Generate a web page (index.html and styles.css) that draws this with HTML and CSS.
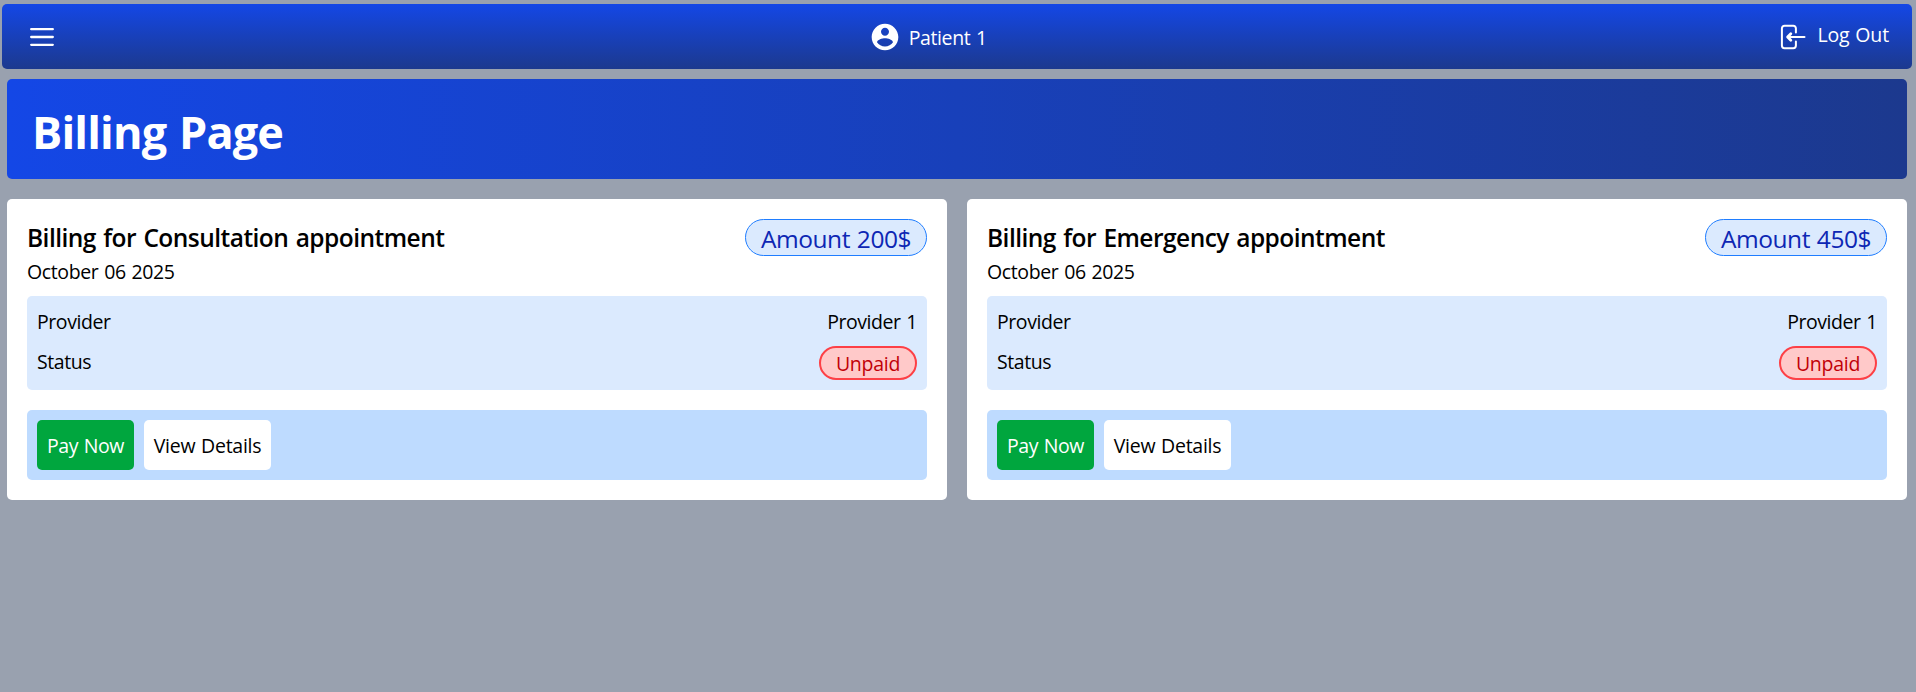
FILE: index.html
```html
<!DOCTYPE html>
<html lang="en">
<head>
<meta charset="utf-8">
<title>Billing Page</title>
<link rel="stylesheet" href="styles.css">
</head>
<body>
<header class="navbar">
  <svg class="menu-icon" viewBox="0 0 24 20" aria-label="Menu"><path d="M1.200 2.200h21.600M1.200 10h21.600M1.200 17.800h21.600"/></svg>
  <div class="user">
    <svg class="user-icon" viewBox="0 0 24 24"><path d="M12 2C6.480 2 2 6.480 2 12s4.480 10 10 10 10-4.480 10-10S17.520 2 12 2zm0 3c1.660 0 3 1.340 3 3s-1.340 3-3 3-3-1.340-3-3 1.340-3 3-3zm0 14.200c-2.500 0-4.710-1.280-6-3.220.030-1.990 4-3.080 6-3.080 1.990 0 5.970 1.090 6 3.080-1.290 1.940-3.500 3.220-6 3.220z"/></svg>
    <span class="user-name">Patient 1</span>
  </div>
  <div class="logout">
    <svg class="logout-icon" viewBox="0 0 26 26"><path d="M15.900 8.400V4.400a2.600 2.600 0 0 0-2.600-2.600H4.500a2.600 2.600 0 0 0-2.600 2.600v17.200a2.600 2.600 0 0 0 2.600 2.600h8.800a2.600 2.600 0 0 0 2.600-2.600v-4"/><path d="M24.500 13H8"/><path class="arrow-head" d="M10.800 9.800L7.600 13l3.200 3.200"/></svg>
    <span class="logout-label">Log Out</span>
  </div>
</header>
<main class="page">
  <section class="banner"><h1 class="banner-title">Billing Page</h1></section>
  <section class="cards">
    <article class="card">
      <div class="card-head">
        <div>
          <h2 class="card-title">Billing for Consultation appointment</h2>
          <p class="date">October 06 2025</p>
        </div>
        <span class="amount">Amount 200$</span>
      </div>
      <div class="info">
        <div class="row"><span>Provider</span><span>Provider 1</span></div>
        <div class="row"><span>Status</span><span class="status">Unpaid</span></div>
      </div>
      <div class="actions">
        <button class="button pay">Pay Now</button>
        <button class="button details">View Details</button>
      </div>
    </article>
    <article class="card">
      <div class="card-head">
        <div>
          <h2 class="card-title">Billing for Emergency appointment</h2>
          <p class="date">October 06 2025</p>
        </div>
        <span class="amount">Amount 450$</span>
      </div>
      <div class="info">
        <div class="row"><span>Provider</span><span>Provider 1</span></div>
        <div class="row"><span>Status</span><span class="status">Unpaid</span></div>
      </div>
      <div class="actions">
        <button class="button pay">Pay Now</button>
        <button class="button details">View Details</button>
      </div>
    </article>
  </section>
</main>
</body>
</html>
```
FILE: styles.css
```css
* { box-sizing: border-box; margin: 0; padding: 0; }
body {
  min-height: 100vh;
  background: #99a1af;
  color: #000;
  font: 19.5px/30px "Segoe UI", "Open Sans", "Noto Sans", sans-serif;
  word-spacing: 1px;
}
.navbar {
  display: flex;
  justify-content: space-between;
  align-items: center;
  height: 65px;
  margin: 4px 4px 0 2px;
  padding: 0 23px 0 28px;
  border-radius: 5px;
  background: linear-gradient(#1447e6, #1c398e);
  color: #fff;
}
.menu-icon { width: 24px; height: 20px; margin-right: 21px; fill: none; stroke: #fff; stroke-width: 2.3; stroke-linecap: round; }
.user { display: flex; align-items: center; gap: 8px; }
.user-icon { width: 32px; height: 32px; fill: #fff; }
.user-name { letter-spacing: -0.38px; padding-top: 3px; }
.logout { display: flex; align-items: center; gap: 11px; }
.logout-icon { width: 26px; height: 26px; fill: none; stroke: #fff; stroke-width: 2; stroke-linecap: round; stroke-linejoin: round; }
.arrow-head { stroke-width: 2.8; }
.logout-label { letter-spacing: -0.15px; padding-bottom: 3px; }
.page { margin: 10px 9px 0 7px; }
.banner {
  display: flex;
  align-items: center;
  height: 100px;
  padding: 6px 25px 0;
  border-radius: 5px;
  background: linear-gradient(to right, #1447e6, #1c398e);
  color: #fff;
}
.banner-title { font-size: 45px; line-height: 60px; font-weight: 700; letter-spacing: -0.85px; word-spacing: 2px; }
.cards { display: grid; grid-template-columns: 1fr 1fr; gap: 20px; margin-top: 20px; }
.card { height: 301px; padding: 20px; border-radius: 5px; background: #fff; }
.card-head { display: flex; justify-content: space-between; align-items: flex-start; height: 77px; }
.card-title { font-size: 24.5px; line-height: 35px; font-weight: 600; letter-spacing: -0.53px; word-spacing: 1.5px; padding-top: 1px; }
.date { letter-spacing: -0.37px; padding-top: 2px; }
.amount {
  width: 182px;
  height: 37px;
  border: 1px solid #1f7dff;
  border-radius: 19px;
  background: #dbeafe;
  color: #0d27b4;
  font-size: 24.5px;
  line-height: 37px;
  letter-spacing: -0.45px;
  text-align: center;
}
.info {
  display: flex;
  flex-direction: column;
  gap: 10px;
  height: 94px;
  padding: 10px;
  border-radius: 5px;
  background: #dbeafe;
  letter-spacing: -0.43px;
}
.row { display: flex; justify-content: space-between; height: 30px; line-height: 32px; }
.status {
  width: 98px;
  height: 34px;
  border: 2px solid #fd4046;
  border-radius: 17px;
  background: #ffc9c9;
  color: #c10007;
  letter-spacing: -0.27px;
  line-height: 32px;
  text-align: center;
}
.actions { display: flex; gap: 10px; height: 70px; margin-top: 20px; padding: 10px; border-radius: 5px; background: #bedbff; }
.button { border: 0; border-radius: 5px; font: inherit; padding-top: 2px; word-spacing: 1px; }
.pay { width: 97px; background: #00a63e; color: #fff; letter-spacing: -0.43px; }
.details { width: 127px; background: #fff; color: #000; letter-spacing: -0.27px; }
```
